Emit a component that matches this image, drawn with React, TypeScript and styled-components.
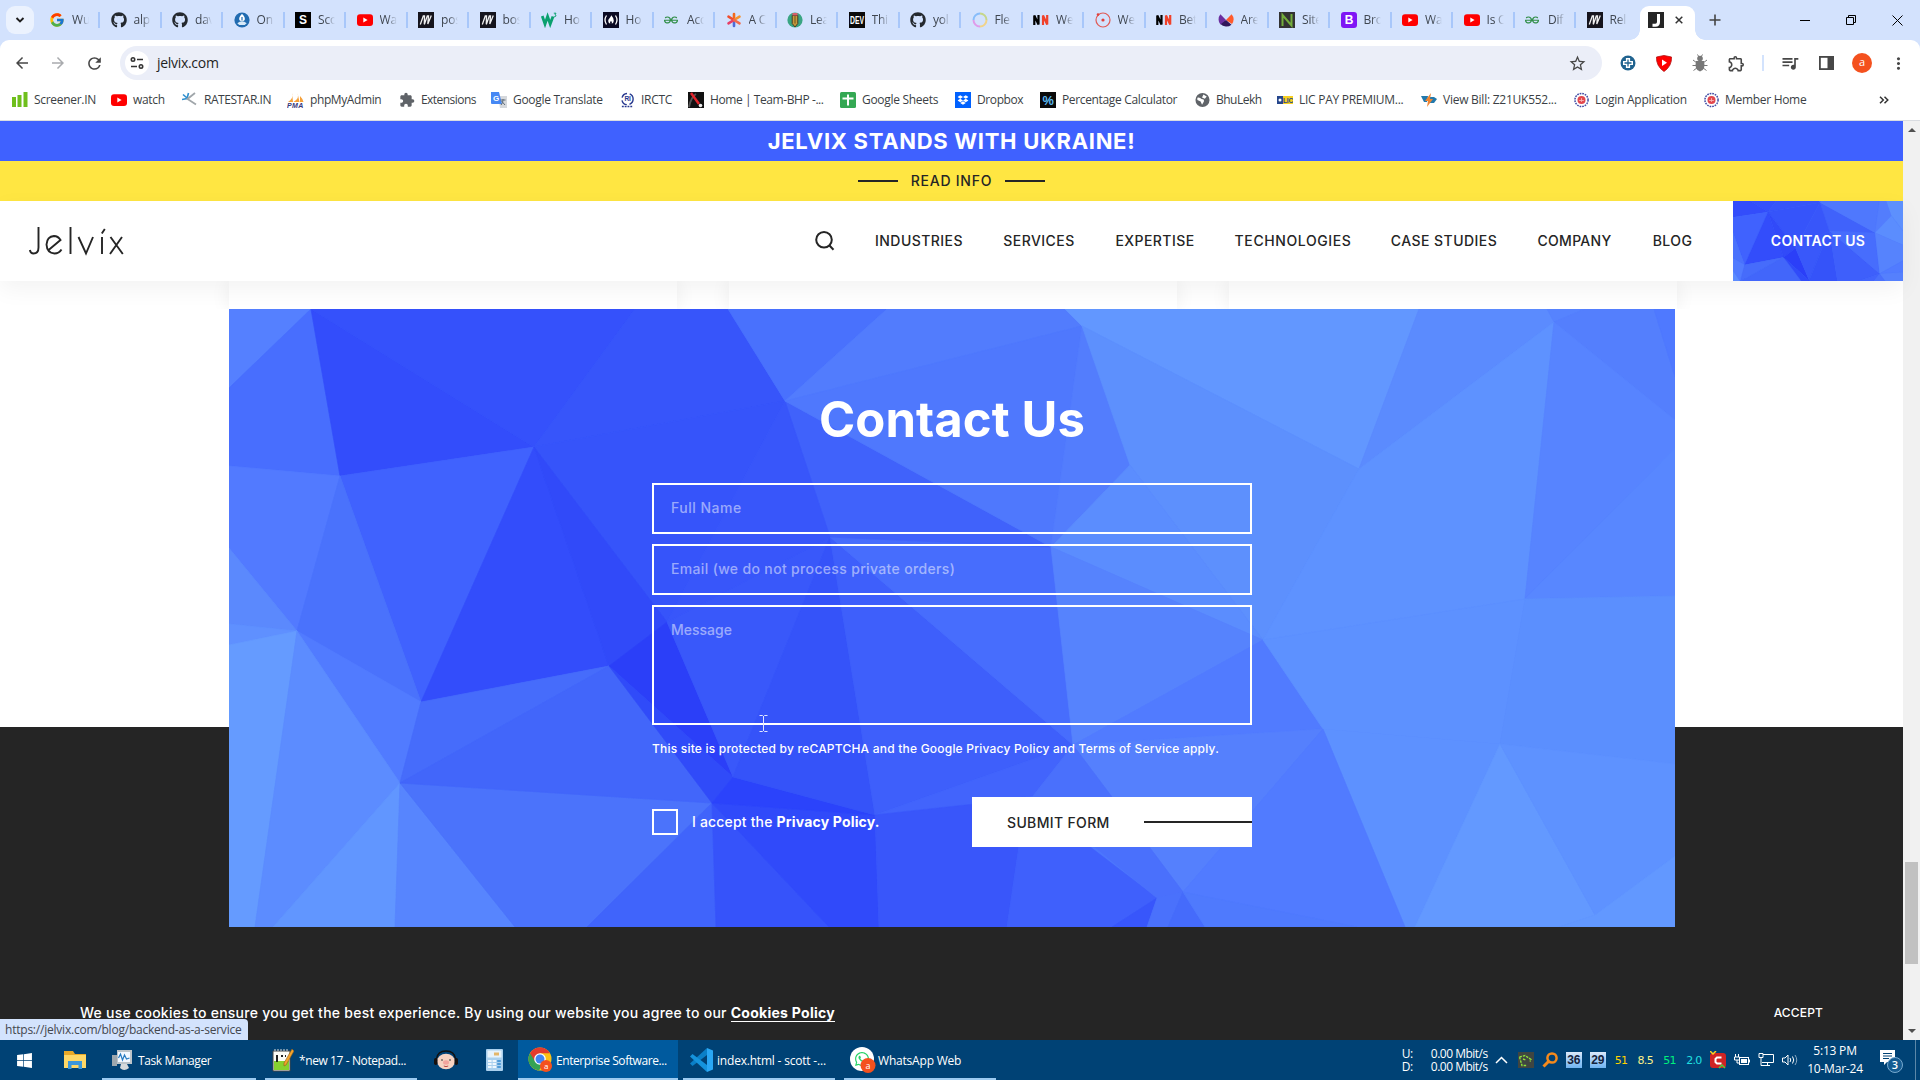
import React from "react";
import styled, { createGlobalStyle, css } from "styled-components";
import { FaGithub, FaDropbox, FaWhatsapp, FaWindows } from "react-icons/fa";
import { FcGoogle } from "react-icons/fc";
import { SiGeeksforgeeks } from "react-icons/si";
import { MdArrowBack, MdArrowForward, MdRefresh, MdStarOutline, MdQueueMusic, MdOutlineExtension, MdExtension, MdMoreVert } from "react-icons/md";

const GlobalStyle = createGlobalStyle`
  * { box-sizing: border-box; }
  body { margin: 0; overflow: hidden; background: #fff; }
`;

const ui = `"Open Sans", "Noto Sans", sans-serif`;
const brand = `Inter, "Liberation Sans", sans-serif`;

const Screen = styled.div`
  position: relative;
  width: 1920px;
  height: 1080px;
  display: flex;
  flex-direction: column;
  overflow: hidden;
  font-family: ${ui};
  svg { display: block; flex: none; }
`;

/* ---------- Browser tabs ---------- */
const TabStrip = styled.div`
  height: 40px;
  flex: none;
  display: flex;
  align-items: center;
  background: #d3e2fd;
  padding-left: 6px;
`;
const TabSearch = styled.div`
  width: 28px;
  height: 28px;
  border-radius: 9px;
  background: #ebf2fe;
  display: grid;
  place-items: center;
  margin-right: 15px;
`;
const Tab = styled.div`
  width: 61.5px;
  height: 16px;
  flex: none;
  display: flex;
  align-items: center;
  gap: 7px;
`;
const TabTitle = styled.span`
  width: 17px;
  overflow: hidden;
  white-space: nowrap;
  font-size: 12px;
  line-height: 16px;
  letter-spacing: -0.2px;
  color: #3f4650;
  mask-image: linear-gradient(90deg, #000 45%, transparent 100%);
`;
const TabDivider = styled.i`
  width: 2px;
  height: 16px;
  margin-left: 2px;
  background: #a8c7fa;
`;
const ActiveTab = styled.div`
  position: relative;
  align-self: flex-end;
  width: 55px;
  height: 34px;
  margin-left: -8px;
  padding: 0 12px 0 8px;
  display: flex;
  align-items: center;
  justify-content: space-between;
  background: #fff;
  border-radius: 9px 9px 0 0;
  padding-bottom: 6px;
  &::before, &::after {
    content: "";
    position: absolute;
    bottom: 0;
    width: 10px;
    height: 10px;
  }
  &::before { left: -10px; background: radial-gradient(circle at 0 0, transparent 9.5px, #fff 10px); }
  &::after { right: -10px; background: radial-gradient(circle at 100% 0, transparent 9.5px, #fff 10px); }
`;
const NewTab = styled.div`margin-left: 14px;`;
const WindowButtons = styled.div`
  margin-left: auto;
  display: flex;
  width: 138px;
  > * { width: 46px; display: flex; justify-content: center; }
`;

/* ---------- Toolbar ---------- */
const Toolbar = styled.div`
  height: 45px;
  flex: none;
  display: flex;
  align-items: center;
  background: linear-gradient(#d3e2fd, #d3e2fd) 0 0 / 100% 10px no-repeat;
  color: #474747;
`;
const ToolbarSurface = styled.div`
  width: 100%;
  height: 45px;
  display: flex;
  align-items: center;
  background: #fff;
  border-radius: 9px 9px 0 0;
  padding: 1px 4px 0 4px;
`;
const ToolButton = styled.div`
  width: 36px;
  display: flex;
  justify-content: center;
`;
const Omnibox = styled.div`
  flex: none;
  width: 1482px;
  height: 34px;
  margin: 0 8px;
  padding: 0 15px 0 5px;
  border-radius: 17px;
  background: #ebeef8;
  display: flex;
  align-items: center;
  justify-content: space-between;
`;
const Address = styled.div`
  display: flex;
  align-items: center;
  gap: 8px;
  font-size: 14px;
  line-height: 20px;
  letter-spacing: -0.3px;
  color: #1f1f1f;
`;
const SiteChip = styled.div`
  width: 24px;
  height: 24px;
  border-radius: 50%;
  background: #fff;
  display: grid;
  place-items: center;
`;
const ToolDivider = styled.i`
  width: 2px;
  height: 16px;
  margin: 0 8px;
  background: #d3e3fd;
`;
const Avatar = styled.div`
  width: 20px;
  height: 20px;
  border-radius: 50%;
  background: #f4511e;
  color: #fff;
  font-size: 11px;
  line-height: 18px;
  text-align: center;
`;

const Bookmarks = styled.div`
  height: 36px;
  flex: none;
  display: flex;
  align-items: center;
  padding: 0 0 6px 12px;
  background: #fff;
  border-bottom: 1px solid #d9dce1;
`;
const Bookmark = styled.div<{ $w: number; $track?: number }>`
  width: ${(p) => p.$w}px;
  flex: none;
  display: flex;
  align-items: center;
  gap: 6px;
  white-space: nowrap;
  font-size: 12px;
  line-height: 16px;
  letter-spacing: ${(p) => p.$track ?? -0.3}px;
  color: #3b3f45;
`;
const Overflow = styled.div`margin-left: 35px;`;

/* ---------- Web page ---------- */
const Viewport = styled.div`
  height: 919px;
  flex: none;
  display: flex;
`;
const Page = styled.div`
  width: 1903px;
  display: flex;
  flex-direction: column;
  font-family: ${brand};
  background: linear-gradient(#fff 606px, #252525 606px);
`;
const Stand = styled.div`
  height: 40px;
  flex: none;
  background: #3f61ff;
  color: #fff;
  display: flex;
  align-items: center;
  justify-content: center;
  font-size: 22px;
  font-weight: 700;
  letter-spacing: 0.7px;
`;
const ReadInfo = styled.div`
  height: 40px;
  flex: none;
  background: #ffe642;
  color: #252525;
  display: flex;
  align-items: center;
  justify-content: center;
  gap: 13px;
  font-size: 14px;
  line-height: 16px;
  font-weight: 500;
  letter-spacing: 0.75px;
  &::before, &::after { content: ""; width: 40px; height: 2px; background: #252525; }
`;
const Header = styled.header`
  position: relative;
  z-index: 1;
  height: 80px;
  flex: none;
  display: flex;
  align-items: center;
  background: #fff;
  padding-left: 29px;
  box-shadow: 0 8px 22px rgba(0, 0, 0, 0.05);
`;
const Nav = styled.nav`
  margin-left: auto;
  display: flex;
  align-items: center;
  gap: 40px;
  padding: 0 40px 1px 0;
`;
const NavLink = styled.a<{ $w: number; $track?: number }>`
  width: ${(p) => p.$w}px;
  white-space: nowrap;
  display: flex;
  justify-content: center;
  font-size: 14px;
  font-weight: 500;
  letter-spacing: ${(p) => p.$track ?? 0.45}px;
  color: #252525;
`;
const HeaderCta = styled.div`
  display: grid;
  width: 170px;
  height: 80px;
  > * { grid-area: 1 / 1; }
`;
const CtaText = styled.span`
  place-self: center;
  padding-bottom: 1px;
  color: #fff;
  font-size: 14px;
  font-weight: 600;
  letter-spacing: 0.25px;
  z-index: 1;
`;
const Cards = styled.div`
  height: 28px;
  flex: none;
  display: flex;
  gap: 52px;
  padding-left: 229px;
  overflow: hidden;
`;
const Card = styled.div`
  width: 448px;
  background: #fff;
  box-shadow: 0 0 20px rgba(0, 0, 0, 0.07);
`;
const Contact = styled.section`
  display: grid;
  width: 1446px;
  height: 618px;
  flex: none;
  margin-left: 229px;
  > * { grid-area: 1 / 1; }
`;
const Form = styled.form`
  position: relative;
  width: 600px;
  justify-self: center;
  display: flex;
  flex-direction: column;
  color: #fff;
`;
const Title = styled.h2`
  margin: 82px 0 0;
  height: 92px;
  line-height: 58px;
  text-align: center;
  font-size: 49px;
  font-weight: 700;
  letter-spacing: 0.1px;
`;
const Field = styled.div<{ $h: number; $track: number }>`
  height: ${(p) => p.$h}px;
  flex: none;
  margin-bottom: 10px;
  border: 2px solid #fff;
  padding: 13px 17px;
  font-size: 14px;
  line-height: 19px;
  font-weight: 500;
  letter-spacing: ${(p) => p.$track}px;
  color: rgba(255, 255, 255, 0.5);
`;
const Notice = styled.p`
  margin: 4px 0 0;
  height: 58px;
  font-size: 12px;
  line-height: 20px;
  font-weight: 500;
  white-space: nowrap;
  letter-spacing: 0.21px;
`;
const Actions = styled.div`
  display: flex;
  justify-content: space-between;
  height: 50px;
`;
const Consent = styled.label`
  display: flex;
  align-items: center;
  gap: 14px;
  font-size: 14px;
  line-height: 18px;
  font-weight: 500;
  letter-spacing: 0.18px;
  white-space: nowrap;
  b { font-weight: 700; }
  span { padding-bottom: 1px; }
`;
const Check = styled.i`
  width: 26px;
  height: 26px;
  border: 2px solid #fff;
`;
const Submit = styled.div`
  width: 280px;
  height: 50px;
  background: #fff;
  color: #252525;
  display: flex;
  align-items: center;
  justify-content: space-between;
  padding-left: 35px;
  font-size: 14px;
  font-weight: 500;
  letter-spacing: 0.35px;
  &::after { content: ""; width: 108px; height: 2px; background: #252525; }
`;
const Cookies = styled.div`
  height: 26px;
  margin: 72px 80px 0;
  display: flex;
  justify-content: space-between;
  align-items: center;
  color: #fff;
  font-size: 14px;
  font-weight: 500;
  letter-spacing: 0.265px;
  a { font-weight: 700; border-bottom: 1px solid #fff; }
`;
const Accept = styled.span`font-size: 12px; letter-spacing: 0.15px;`;

const Scrollbar = styled.div`
  width: 17px;
  background: #f1f1f1;
  display: flex;
  flex-direction: column;
  align-items: center;
  padding: 6px 0;
`;
const Thumb = styled.div`
  width: 13px;
  height: 102px;
  margin: 730px 0 auto;
  background: #c1c1c1;
`;
const StatusBubble = styled.div`
  position: absolute;
  left: 0;
  top: 1019px;
  width: 248px;
  height: 21px;
  padding-left: 5px;
  border-radius: 0 4px 0 0;
  background: #d3e3fd;
  color: #43474e;
  font-size: 12px;
  line-height: 21px;
  letter-spacing: -0.22px;
  white-space: nowrap;
`;
const Caret = styled.svg`
  position: absolute;
  left: 107px;
  top: 406px;
`;

/* ---------- Taskbar ---------- */
const Taskbar = styled.div`
  height: 40px;
  flex: none;
  display: flex;
  background: #004275;
  color: #fff;
  font-size: 12px;
`;
const taskItem = css`
  display: flex;
  align-items: center;
  height: 40px;
  flex: none;
`;
const Pinned = styled.div<{ $w: number }>`
  ${taskItem}
  width: ${(p) => p.$w}px;
  justify-content: center;
`;
const Running = styled.div<{ $w: number; $gap?: number; $active?: boolean; $pad?: number; $space?: number; $track?: number }>`
  ${taskItem}
  width: ${(p) => p.$w}px;
  margin-right: ${(p) => p.$gap ?? 0}px;
  padding-left: ${(p) => p.$pad ?? 6}px;
  gap: ${(p) => p.$space ?? 5}px;
  white-space: nowrap;
  letter-spacing: ${(p) => p.$track ?? -0.4}px;
  background: ${(p) => (p.$active ? "#005a9e" : "transparent")};
  box-shadow: inset 0 -2px #9ccaf0;
`;
const Tray = styled.div`
  margin-left: auto;
  display: flex;
  align-items: center;
`;
const Speed = styled.div`
  display: grid;
  grid-template-columns: 29px 59px;
  width: 88px;
  font-size: 12px;
  line-height: 13px;
  letter-spacing: -0.5px;
  white-space: nowrap;
`;
const TrayIcon = styled.div<{ $w?: number }>`
  width: ${(p) => p.$w ?? 24}px;
  display: flex;
  justify-content: center;
`;
const Temp = styled.div<{ $c: string }>`
  width: 24.3px;
  text-align: center;
  color: ${(p) => p.$c};
  font: 11px "DejaVu Sans", sans-serif;
  letter-spacing: -0.7px;
`;
const Meters = styled.div`
  display: flex;
  gap: 8px;
  padding: 0 3px 0 4px;
`;
const Meter = styled.div`
  width: 16px;
  height: 16px;
  background: linear-gradient(#dbe9fb, #6fb4f2);
  color: #14233c;
  font: bold 12px/17px "Liberation Sans", sans-serif;
  text-align: center;
`;
const Clock = styled.div`
  width: 66px;
  text-align: center;
  font-size: 12px;
  line-height: 18px;
  letter-spacing: -0.2px;
  white-space: nowrap;
`;
const ShowDesktop = styled.i`
  height: 40px;
  width: 5px;
  margin-left: 1px;
  border-left: 1px solid #5c87a8;
`;

/* ---------- Small drawings ---------- */
type TileProps = { bg: string; fg?: string; t: string; size?: number; r?: number; fit?: number };
const Tile = ({ bg, fg = "#fff", t, size = 12, r = 0, fit }: TileProps) => (
  <svg width="16" height="16" viewBox="0 0 16 16">
    <rect width="16" height="16" rx={r} fill={bg} />
    <text x="8" y={8 + size * 0.36} textAnchor="middle" fill={fg} fontFamily="Liberation Sans, sans-serif" fontWeight="700" fontSize={size} textLength={fit} lengthAdjust="spacingAndGlyphs">{t}</text>
  </svg>
);
const YouTube = () => (
  <svg width="16" height="16" viewBox="0 0 16 16"><rect y="2.3" width="16" height="11.6" rx="3" fill="#f00" /><path d="M6.3 5.6v5L10.6 8z" fill="#fff" /></svg>
);
const Daily = () => (
  <svg width="16" height="16" viewBox="0 0 16 16"><rect width="16" height="16" fill="#15141d" /><path d="M2.3 12.500 5.300 4h1.200L6.300 12M6.300 12.500 9.300 4h1.200L9.800 12l3.500-8.500" stroke="#f1f1f1" strokeWidth="1.300" fill="none" /></svg>
);
const Geeks = () => <SiGeeksforgeeks size={14} color="#2f8d46" style={{ marginRight: 2 }} />;
const OnIcon = () => (
  <svg width="16" height="16" viewBox="0 0 16 16"><circle cx="8" cy="8" r="7.6" fill="#216bb0" /><path d="M8 1.800q4 4 2.500 6.500-2.500 2-5 0Q4 6 8 1.800z" fill="#fff" /><path d="M3.300 11.300Q8 7 12.700 11.300L10.700 13H5.300z" fill="#d6e9f8" /><path d="M8 5v3.500" stroke="#216bb0" strokeWidth="1.200" /></svg>
);
const W3 = () => (
  <svg width="16" height="16" viewBox="0 0 16 16"><path d="m1.200 4 2.800 8 2.600-7.500L9.200 12 12 4.500" stroke="#0aa06e" strokeWidth="2.800" fill="none" /><path d="M12.800 1.200h2.200l-1 1.400q1.700.300.600 1.800-.9.700-1.800.1" stroke="#0aa06e" fill="none" /></svg>
);
const Camp = () => (
  <svg width="16" height="16" viewBox="0 0 16 16"><rect width="16" height="16" fill="#0a0a23" /><path d="M3.500 3.500q-3 4.500 0 9M12.500 3.500q3 4.500 0 9" stroke="#fff" strokeWidth="1.300" fill="none" /><path d="M8.300 3.200q2.700 3 2.500 5.500-.2 2.300-2 3 .5-1.700-.8-3-1.500 1.300-.8 3-2-.7-2-2.800 0-1.500 1.300-2.700 1-.9 1.800-3z" fill="#fff" /></svg>
);
const Star6 = () => (
  <svg width="16" height="16" viewBox="0 0 16 16" strokeWidth="2.600" strokeLinecap="round"><path d="M8 8V2" stroke="#f26a1b" /><path d="M8 8v6" stroke="#4f6bd8" /><path d="m8 8-5.500-3.300" stroke="#f04e2e" /><path d="m8 8 5.500-3.300" stroke="#f59330" /><path d="M8 8 2.500 11.400" stroke="#e73e66" /><path d="m8 8 5.500 3.400" stroke="#f26a4b" /></svg>
);
const Pencil = () => (
  <svg width="16" height="16" viewBox="0 0 16 16"><circle cx="8" cy="8" r="7.600" fill="#3aa583" /><path d="M5.200 3.500h5.600v8L8 15l-2.800-3.500z" fill="#c99a3b" stroke="#4b3b24" /><path d="M5.500 1h5v2.500h-5z" fill="#d65f6b" /><path d="M8 4v7.500" stroke="#6d5123" /></svg>
);
const Ring = () => (
  <svg width="16" height="16" viewBox="0 0 16 16" fill="none" strokeWidth="2"><path d="M8 1.500A6.500 6.500 0 0 1 14.500 8" stroke="#c5d68b" /><path d="M14.500 8A6.500 6.500 0 0 1 8 14.500" stroke="#f1d38a" /><path d="M8 14.500A6.500 6.500 0 0 1 1.500 8" stroke="#df9bea" /><path d="M1.500 8A6.500 6.500 0 0 1 8 1.500" stroke="#88bdfa" /></svg>
);
const NN = () => (
  <svg width="16" height="16" viewBox="0 0 16 16" fill="none" strokeWidth="2.200"><path d="M1.300 13V3.500l4.200 9V3" stroke="#000" /><path d="M10 13V3.500l4.200 9V3" stroke="#f0412a" /></svg>
);
const Orbit = () => (
  <svg width="16" height="16" viewBox="0 0 16 16"><circle cx="8" cy="8" r="7" stroke="#e05a55" strokeWidth="1.200" fill="none" /><circle cx="8" cy="8" r="1.600" fill="#e0413c" /><circle cx="3" cy="2.600" r="1.300" fill="#e0413c" /></svg>
);
const Purple = () => (
  <svg width="16" height="16" viewBox="0 0 16 16"><path d="M13.600 2.300 8 8l6 4A8 8 0 0 0 13.600 2.300z" fill="#ff5a2c" /><path d="M2.400 11 8 8l5.500 4.700A8 8 0 0 1 2.400 12z" fill="#31165a" /><path d="M2.400 2.300 8 8l-5.600 4.500A8 8 0 0 1 2.400 2.300z" fill="#6b2fa0" /></svg>
);
const Node = () => (
  <svg width="16" height="16" viewBox="0 0 16 16"><rect width="16" height="16" fill="#333" /><path d="M3.500 14V3l9 10.500V2" fill="none" stroke="#73ad3c" strokeWidth="2" /></svg>
);
const JTile = () => (
  <svg width="16" height="16" viewBox="0 0 16 16"><rect width="16" height="16" fill="#252525" /><path d="M10.500 2v8q0 3.300-3.200 3.300H4.500" fill="none" stroke="#fff" strokeWidth="3" /></svg>
);
const Bars = () => (
  <svg width="16" height="16" viewBox="0 0 16 16" fill="#6fbf1c"><rect y="5" width="4" height="10" /><rect x="5.500" y="3" width="4" height="12" /><rect x="11.500" width="4" height="15" /></svg>
);
const Ratestar = () => (
  <svg width="16" height="16" viewBox="0 0 16 16" fill="none"><path d="M1 2.500 5 6M0 7.500l5-1L6.500 1" stroke="#2f8fce" strokeWidth="1.600" /><path d="M13 1 5.500 7 14 12.500" stroke="#a0a6aa" strokeWidth="1.800" /></svg>
);
const Pma = () => (
  <svg width="17" height="16" viewBox="0 0 17 16"><path d="M5 1q2 5-4 9h5zM10.500 1q2.500 5-4 9h6zM13 4q3 3 3.500 6H13z" fill="#f5a13a" /><text x="0" y="15.500" fontSize="7" fontWeight="700" fontStyle="italic" fontFamily="Liberation Sans" fill="#35377b" textLength="16">PMA</text></svg>
);
const Translate = () => (
  <svg width="16" height="16" viewBox="0 0 16 16"><path d="M7 4h9v12H9z" fill="#d5d8dc" /><path d="M0 0h8l3 12H1a1 1 0 0 1-1-1z" fill="#4688f4" /><text x="2" y="9" fontSize="8" fontFamily="Liberation Sans" fontWeight="700" fill="#fff">G</text><path d="M9.500 8h5M12 7v1q0 3-2 5M10.500 9l3.500 4" stroke="#5e6b78" fill="none" /></svg>
);
const Irctc = () => (
  <svg width="15" height="16" viewBox="0 0 16 16"><circle cx="8" cy="7" r="6" fill="none" stroke="#2a3a8f" strokeDasharray="7 3" strokeWidth="1.500" /><text x="4.800" y="9.500" fontSize="7" fontFamily="Liberation Sans" fontWeight="700" fill="#2a3a8f">RI</text><path d="M2 15h12" stroke="#2a3a8f" strokeDasharray="2 1" strokeWidth="1.500" /></svg>
);
const Bhp = () => (
  <svg width="16" height="16" viewBox="0 0 16 16"><rect width="16" height="16" fill="#111" /><path d="M1 15Q3 5 8 2" stroke="#555" strokeWidth="2" fill="none" /><path d="m3 1 8 11" stroke="#e3242b" strokeWidth="2.500" /><circle cx="12.500" cy="13.500" r="1.800" fill="#eee" /></svg>
);
const Sheets = () => (
  <svg width="16" height="16" viewBox="0 0 16 16"><rect width="16" height="16" rx="1.500" fill="#34a853" /><path d="M8 2.500v11M2.500 6.500h11" stroke="#fff" strokeWidth="2" /></svg>
);
const Drop = () => (
  <svg width="16" height="16" viewBox="0 0 16 16"><rect width="16" height="16" fill="#0061fe" /><g transform="translate(2.500 2.500)"><FaDropbox size={11} color="#fff" /></g></svg>
);
const Globe = () => (
  <svg width="15" height="16" viewBox="0 0 16 16"><circle cx="8" cy="8" r="7.500" fill="#5f6368" /><path d="M2.500 5.500q2.500-1 4.500 1.500 3 0 2.500 2.500L7.500 13 6 9.500 2.500 8zM9 2.200l3.500 2-2 2.500-3-1.500z" fill="#fff" /></svg>
);
const Lic = () => (
  <svg width="16" height="16" viewBox="0 0 16 16"><rect y="4" width="16" height="8" fill="#f7cf22" /><rect y="4" width="6" height="8" fill="#25468c" /><text x="6" y="10.500" fontSize="6.500" fontWeight="700" fontFamily="Liberation Sans" fill="#25468c" textLength="10">LIC</text><circle cx="3" cy="8" r="1.500" fill="#fff" /></svg>
);
const Bill = () => (
  <svg width="16" height="16" viewBox="0 0 16 16"><path d="M0 4h7L6 10H3zM9 5h4l3 2-3 4H8z" fill="#2279ad" /><path d="M10 1 4 9h3l-1 6 6-8H9z" fill="#ee8532" /></svg>
);
const Seal = () => (
  <svg width="15" height="16" viewBox="0 0 16 16"><circle cx="8" cy="8" r="7" fill="none" stroke="#3d4aa3" strokeWidth="1.600" strokeDasharray="1.800 1" /><circle cx="8" cy="8" r="4.300" fill="#e2474d" /><path d="M5.500 8.500h5M8 6v4" stroke="#f5b5b5" /></svg>
);
const Bug = () => (
  <svg width="16" height="18" viewBox="0 0 16 18" fill="#777"><circle cx="8" cy="4.500" r="2.800" /><path d="M4 7h8q2 9-4 10.500Q2 16 4 7z" /><path d="m1 6 4 3M15 6l-4 3M.5 11.500h15M1.500 16.500l4-3M14.500 16.500l-4-3M5.500.5 7 3M10.500.5 9 3" stroke="#777" fill="none" /></svg>
);

const TABS: [React.ReactNode, string][] = [
  [<FcGoogle size={16} />, "Wu"], [<FaGithub size={16} color="#24292f" />, "alp"], [<FaGithub size={16} color="#24292f" />, "dav"],
  [<OnIcon />, "On"], [<Tile bg="#000" t="S" />, "Sco"], [<YouTube />, "Wa"], [<Daily />, "pos"], [<Daily />, "bos"], [<W3 />, "Ho"],
  [<Camp />, "Ho"], [<Geeks />, "Acc"], [<Star6 />, "A C"], [<Pencil />, "Lea"], [<Tile bg="#090909" t="DEV" size={10} fit={14} />, "Thi"],
  [<FaGithub size={16} color="#24292f" />, "yol"], [<Ring />, "Fle"], [<NN />, "We"], [<Orbit />, "We"], [<NN />, "Bet"], [<Purple />, "Are"],
  [<Node />, "Site"], [<Tile bg="#7f16f5" t="B" r={3} />, "Bro"], [<YouTube />, "Wa"], [<YouTube />, "Is C"], [<Geeks />, "Dif"], [<Daily />, "Rel"],
];

const MARKS: [React.ReactNode, string, number, number?][] = [
  [<Bars />, "Screener.IN", 99], [<YouTube />, "watch", 71], [<Ratestar />, "RATESTAR.IN", 105, -0.45], [<Pma />, "phpMyAdmin", 112, -0.4],
  [<MdExtension size={16} color="#5f6368" />, "Extensions", 92, -0.55], [<Translate />, "Google Translate", 129], [<Irctc />, "IRCTC", 68],
  [<Bhp />, "Home | Team-BHP -...", 152, -0.42], [<Sheets />, "Google Sheets", 115], [<Drop />, "Dropbox", 85, -0.4],
  [<Tile bg="#0a0a0a" fg="#5bbcf5" t="%" size={13} fit={11} />, "Percentage Calculator", 155, -0.35], [<Globe />, "BhuLekh", 82, -0.5],
  [<Lic />, "LIC PAY PREMIUM...", 144, -0.27], [<Bill />, "View Bill: Z21UK552...", 153, -0.25], [<Seal />, "Login Application", 130, -0.25], [<Seal />, "Member Home", 140],
];

/* Facets of the low-poly artwork: fill followed by corner points. */
const FACETS: [string, string][] = [
  ["#5580ff", "0,0 82,0 0,79"],
  ["#486efe", "82,0 111,167 0,157 0,79"],
  ["#334dfb", "82,0 305,138 111,167"],
  ["#3551fb", "82,0 406,0 305,138"],
  ["#3755fa", "406,0 499,0 556,92 305,138"],
  ["#3654fa", "305,138 556,92 438,313"],
  ["#4062fe", "111,167 305,138 192,393"],
  ["#334dfb", "305,138 380,357 192,393"],
  ["#314af9", "305,138 438,313 380,357"],
  ["#527aff", "0,157 111,167 68,322 0,239"],
  ["#4a72fc", "111,167 192,393 68,322"],
  ["#517bff", "68,322 192,393 171,474"],
  ["#5b89fd", "0,239 68,322 0,315"],
  ["#5f90ff", "0,315 68,322 0,336"],
  ["#659bff", "0,336 68,322 26,618 0,618"],
  ["#5c8cff", "68,322 171,474 44,618 26,618"],
  ["#6196ff", "171,474 166,618 44,618"],
  ["#5785fe", "171,474 286,618 166,618"],
  ["#4b73fb", "171,474 483,494 358,618 286,618"],
  ["#466cfb", "192,393 380,357 171,474"],
  ["#4266fa", "380,357 483,494 171,474"],
  ["#4064fb", "483,494 487,618 358,618"],
  ["#3653fa", "483,494 600,618 487,618"],
  ["#304afa", "483,494 646,506 650,618 600,618"],
  ["#2b3ff8", "380,357 438,313 504,468"],
  ["#304bf9", "380,357 504,468 483,494"],
  ["#2b43fb", "504,468 646,506 483,494"],
  ["#3958fa", "438,313 601,228 504,468"],
  ["#3553f9", "601,228 646,506 504,468"],
  ["#3e5ffb", "601,228 844,436 646,506"],
  ["#476dfd", "601,228 822,238 844,436"],
  ["#4062fb", "556,92 822,238 601,228"],
  ["#3856fa", "556,92 601,228 438,313"],
  ["#4971fd", "499,0 658,0 556,92"],
  ["#527cfd", "658,0 836,0 853,17 556,92"],
  ["#4f78fd", "556,92 853,17 822,238"],
  ["#537dfd", "853,17 901,156 822,238"],
  ["#6297ff", "836,0 1190,0 1130,160 853,17"],
  ["#5d90fd", "853,17 1130,160 1034,331 901,156"],
  ["#5b8dfe", "901,156 1034,331 822,238"],
  ["#5683fd", "822,238 1034,331 844,436"],
  ["#517bff", "1034,331 1094,420 844,436"],
  ["#5b8bfe", "1190,0 1318,0 1325,13 1130,160"],
  ["#5e92ff", "1130,160 1325,13 1296,290 1034,331"],
  ["#5683fe", "1318,0 1356,0 1325,13"],
  ["#547ffd", "1356,0 1425,0 1446,68 1446,111 1325,13"],
  ["#4f79ff", "1425,0 1446,0 1446,68"],
  ["#5784ff", "1325,13 1446,111 1446,139 1296,290"],
  ["#5887ff", "1296,290 1446,139 1446,287"],
  ["#5d91ff", "1034,331 1296,290 1271,435 1094,420"],
  ["#5b8ffe", "1296,290 1446,287 1446,455 1271,435"],
  ["#5d91ff", "1094,420 1271,435 1186,618 1176,618"],
  ["#6399ff", "1271,435 1366,606 1330,618 1186,618"],
  ["#5e92ff", "1271,435 1446,455 1446,547 1366,606"],
  ["#6298ff", "1366,606 1446,547 1446,618 1330,618"],
  ["#5580fd", "844,436 1094,420 954,583"],
  ["#517bff", "1094,420 1176,618 1128,618 954,583"],
  ["#4264fc", "646,506 844,436 804,487"],
  ["#3956fa", "646,506 797,489 778,618 650,618"],
  ["#3f60fc", "797,489 928,589 883,618 778,618"],
  ["#4a70fc", "844,436 954,583 928,589 804,487"],
  ["#3856fb", "928,589 918,618 883,618"],
  ["#4a71fc", "928,589 954,583 939,618 918,618"],
  ["#456bfb", "954,583 976,618 939,618"],
  ["#4f7afd", "954,583 1128,618 976,618"],
];

const LowPoly = ({ w, h, box = "0 0 1446 618" }: { w: number; h: number; box?: string }) => (
  <svg width={w} height={h} viewBox={box} preserveAspectRatio="none">
    <rect width="1446" height="618" fill="#4c76fd" />
    {FACETS.map(([fill, pts]) => <polygon key={pts} points={pts} fill={fill} stroke={fill} strokeWidth="0.7" />)}
  </svg>
);

const Logo = () => (
  <svg width="96" height="30" viewBox="0 0 96 30" fill="none" stroke="#252525" strokeWidth="1.900">
    <path d="M9.500 1v20.500q0 6-5 6-3 0-3.700-3.500" />
    <path d="M19 24.500 31.500 14q-2.500-4-6.500-4-7 .5-7.500 8.500.500 8.500 8 9 4.500 0 7-4" />
    <path d="M41.500 1v27" />
    <path d="m49.500 11 7.500 16.500L64 11" />
    <path d="M73 11v17M72.800 7.500l3-4.500" />
    <path d="m81.500 11 12.300 17M93 11 81 28" />
  </svg>
);

const Chrome = () => (
  <svg width="24" height="26" viewBox="0 0 24 26"><circle cx="12" cy="12" r="11.500" fill="#fbc116" /><path d="M2 6.200A11.500 11.500 0 0 0 11 23.500l5-9z" fill="#34a353" /><path d="M12 6.200h10A11.500 11.500 0 0 0 2 6.200l5 8z" fill="#e33b2e" /><circle cx="12" cy="12" r="5.800" fill="#fff" /><circle cx="12" cy="12" r="4.500" fill="#4285f4" /><circle cx="18" cy="19" r="6" fill="#f4511e" /><text x="18" y="21.500" fontSize="8" textAnchor="middle" fill="#fff" fontFamily="Open Sans">a</text></svg>
);
const VsCode = () => (
  <svg width="24" height="24" viewBox="0 0 24 24"><path d="M18 0 1 15.500 3.500 18 18 7z" fill="#0a7fc7" /><path d="M3.500 6 1 8.500 18 24v-7z" fill="#1593dc" /><path d="m18 0 6 2.500v19L18 24z" fill="#2aa7f4" /></svg>
);
const WhatsApp = () => (
  <svg width="26" height="26" viewBox="0 0 26 26"><circle cx="12" cy="12" r="12" fill="#fff" /><g transform="translate(4 4)"><FaWhatsapp size={16} color="#25d366" /></g><circle cx="18" cy="18.500" r="7.500" fill="#f4511e" /><text x="18" y="21.500" fontSize="9" textAnchor="middle" fill="#fff" fontFamily="Open Sans">a</text></svg>
);
const TaskMgr = () => (
  <svg width="22" height="22" viewBox="0 0 22 22"><path d="M6 1h15v14H6z" fill="#bcc4c9" /><path d="M1 6h5v11H1z" fill="#9da7ae" /><path d="M7 3h12v10H7z" fill="#f2f8ff" /><path d="m7.500 9 2-4 2 6 2-5 2 4 3-1" stroke="#267ac0" strokeWidth="1.200" fill="none" /><path d="M10 15h6l2 4q-5 4-9 0z" fill="#d5d9db" /></svg>
);
const Notepad = () => (
  <svg width="22" height="24" viewBox="0 0 22 24"><path d="M1 3h17v20H1z" fill="#fcfcf5" stroke="#444" /><path d="M2 13h15v9H2z" fill="#86d12f" /><path d="M3 3v-2M6 3v-2M9 3v-2M12 3v-2M15 3v-2" stroke="#ddd" /><path d="M5 7v7M9 8h2M13 8h1" stroke="#222" strokeWidth="2" /><path d="m20 1 2 2-8 14-2 1v-3z" fill="#f2a32d" stroke="#915d15" strokeWidth=".6" /></svg>
);
const Explorer = () => (
  <svg width="22" height="20" viewBox="0 0 22 20"><path d="M0 1h9l2 3h11v14H0z" fill="#e9a928" /><path d="M0 5h22v13H0z" fill="#ffd867" /><path d="M4 19v-8h14v8h-3.500v-4h-7v4z" fill="#3b97dc" /></svg>
);
const Pig = () => (
  <svg width="24" height="20" viewBox="0 0 24 20"><path d="M2.500 12V9q1-8 9.500-8t9.500 8v3" fill="none" stroke="#111" strokeWidth="1.500" /><ellipse cx="12" cy="11.500" rx="9" ry="7.800" fill="#f7d3c2" /><rect y="8" width="3.500" height="7" rx="1.700" fill="#15100f" /><rect x="20.500" y="8" width="3.500" height="7" rx="1.700" fill="#15100f" /><ellipse cx="12" cy="12.500" rx="3" ry="2.200" fill="#f3a49d" /><circle cx="8" cy="10" r=".8" fill="#222" /><circle cx="16" cy="10" r=".8" fill="#222" /><path d="M9.800 16q2.200 1.300 4.400 0" stroke="#b44" fill="none" /></svg>
);
const Calc = () => (
  <svg width="17" height="22" viewBox="0 0 17 22"><rect width="17" height="22" rx="1" fill="#a9d0ee" /><rect x="1.500" y="1.500" width="14" height="7" fill="#e7f3fb" /><path d="M8 3.500h5v3H8z" fill="#e3b66a" />{[11, 14, 17].map((y) => [2, 6.6, 11.2].map((x) => <rect key={`${x}-${y}`} x={x} y={y} width="3.600" height="2" fill={x > 10 ? "#4f9ad6" : "#eef7fd"} />))}</svg>
);

export default function App() {
  return (
    <Screen>
      <GlobalStyle />
      <TabStrip>
        <TabSearch><svg width="10" height="8" viewBox="0 0 10 8"><path d="m1.500 2 3.500 3.500L8.500 2" fill="none" stroke="#1f1f1f" strokeWidth="1.900" /></svg></TabSearch>
        {TABS.map(([icon, title], i) => (
          <Tab key={i}>{icon}<TabTitle>{title}</TabTitle>{i < 25 && <TabDivider />}</Tab>
        ))}
        <ActiveTab><JTile /><svg width="8" height="8" viewBox="0 0 8 8"><path d="m.7.700 6.600 6.600M7.300.700.700 7.300" stroke="#333" strokeWidth="1.500" /></svg></ActiveTab>
        <NewTab><svg width="12" height="12" viewBox="0 0 12 12"><path d="M6 .5v11M.5 6h11" stroke="#444" strokeWidth="1.600" /></svg></NewTab>
        <WindowButtons>
          <span><svg width="10" height="10"><path d="M0 5.500h10" stroke="#000" /></svg></span>
          <span><svg width="10" height="10" fill="none" stroke="#000"><path d="M.5 2.500h7v7h-7zM2.500 2.500v-2h7v7h-2" /></svg></span>
          <span><svg width="11" height="11"><path d="m.5.5 10 10M10.500.5l-10 10" stroke="#000" /></svg></span>
        </WindowButtons>
      </TabStrip>

      <Toolbar>
        <ToolbarSurface>
          <ToolButton><MdArrowBack size={18} /></ToolButton>
          <ToolButton><MdArrowForward size={18} color="#a9abae" /></ToolButton>
          <ToolButton><MdRefresh size={19} /></ToolButton>
          <Omnibox>
            <Address>
              <SiteChip><svg width="14" height="14" viewBox="0 0 14 14" fill="none" stroke="#333" strokeWidth="1.600"><circle cx="3" cy="3.500" r="1.700" /><path d="M7 3.500h6M1 10.500h6" /><circle cx="11" cy="10.500" r="1.700" /></svg></SiteChip>
              jelvix.com
            </Address>
            <MdStarOutline size={19} />
          </Omnibox>
          <ToolButton><svg width="16" height="16" viewBox="0 0 16 16"><circle cx="8" cy="8" r="7.500" fill="#20638f" /><path d="M8 3v10M3 8h10" stroke="#fff" strokeWidth="4.200" /><path d="M8 4.500v7M4.500 8h7" stroke="#20638f" strokeWidth="1.300" /></svg></ToolButton>
          <ToolButton><svg width="16" height="17" viewBox="0 0 16 17"><path d="M8 .5 15.500 2q.5 9-7.500 14.500Q0 11 .5 2z" fill="#f00" stroke="#b01010" strokeWidth=".8" /><path d="m6 4.500 5 3.200-5 3.200z" fill="#fff" /></svg></ToolButton>
          <ToolButton><Bug /></ToolButton>
          <ToolButton><MdOutlineExtension size={19} /></ToolButton>
          <ToolDivider />
          <ToolButton><MdQueueMusic size={20} /></ToolButton>
          <ToolButton><svg width="15" height="14" viewBox="0 0 15 14"><rect x=".9" y=".9" width="13.200" height="12.200" fill="none" stroke="#474747" strokeWidth="1.800" /><path d="M8.500 1H14v12H8.500z" fill="#474747" /></svg></ToolButton>
          <ToolButton><Avatar>a</Avatar></ToolButton>
          <ToolButton><MdMoreVert size={19} /></ToolButton>
        </ToolbarSurface>
      </Toolbar>

      <Bookmarks>
        {MARKS.map(([icon, label, w, track]) => <Bookmark key={label} $w={w} $track={track}>{icon}{label}</Bookmark>)}
        <Overflow><svg width="10" height="8" viewBox="0 0 10 8"><path d="m1 .7 3.300 3.300L1 7.300M5.500.7 8.800 4 5.500 7.300" fill="none" stroke="#333" strokeWidth="1.500" /></svg></Overflow>
      </Bookmarks>

      <Viewport>
        <Page>
          <Stand>JELVIX STANDS WITH UKRAINE!</Stand>
          <ReadInfo>READ INFO</ReadInfo>
          <Header>
            <Logo />
            <Nav>
              <svg width="20" height="20" viewBox="0 0 20 20" fill="none" stroke="#252525" strokeWidth="2"><circle cx="9" cy="8.800" r="7.800" /><path d="m14 14 4.500 4.800" /></svg>
              <NavLink $w={88}>INDUSTRIES</NavLink>
              <NavLink $w={72}>SERVICES</NavLink>
              <NavLink $w={80}>EXPERTISE</NavLink>
              <NavLink $w={116} $track={0.6}>TECHNOLOGIES</NavLink>
              <NavLink $w={106}>CASE STUDIES</NavLink>
              <NavLink $w={75} $track={0.3}>COMPANY</NavLink>
              <NavLink $w={41}>BLOG</NavLink>
            </Nav>
            <HeaderCta><LowPoly w={170} h={80} box="136 85 821 386" /><CtaText>CONTACT US</CtaText></HeaderCta>
          </Header>
          <Cards><Card /><Card /><Card /></Cards>
          <Contact>
            <LowPoly w={1446} h={618} />
            <Form>
              <Title>Contact Us</Title>
              <Field $h={51} $track={0.5}>Full Name</Field>
              <Field $h={51} $track={0.34}>Email (we do not process private orders)</Field>
              <Field $h={120} $track={0}>Message</Field>
              <Notice>This site is protected by reCAPTCHA and the Google Privacy Policy and Terms of Service apply.</Notice>
              <Actions>
                <Consent><Check /><span>I accept the <b>Privacy Policy.</b></span></Consent>
                <Submit>SUBMIT FORM</Submit>
              </Actions>
              <Caret width="9" height="17" viewBox="0 0 9 17"><path d="M.5.5h3l1 1 1-1h3M4.500 1v15M.5 16.500h3l1-1 1 1h3" fill="none" stroke="#dfe5ff" /></Caret>
            </Form>
          </Contact>
          <Cookies>
            <span>We use cookies to ensure you get the best experience. By using our website you agree to our <a>Cookies Policy</a></span>
            <Accept>ACCEPT</Accept>
          </Cookies>
        </Page>
        <Scrollbar>
          <svg width="8" height="5"><path d="m0 5 4-4 4 4z" fill="#505050" /></svg>
          <Thumb />
          <svg width="8" height="5"><path d="m0 0 4 4 4-4z" fill="#505050" /></svg>
        </Scrollbar>
      </Viewport>
      <StatusBubble>https://jelvix.com/blog/backend-as-a-service</StatusBubble>

      <Taskbar>
        <Pinned $w={48}><FaWindows size={17} /></Pinned>
        <Pinned $w={54}><Explorer /></Pinned>
        <Running $w={154} $gap={9} $pad={9}><TaskMgr />Task Manager</Running>
        <Running $w={152} $gap={4} $pad={7}><Notepad />*new 17 - Notepad...</Running>
        <Pinned $w={49}><Pig /></Pinned>
        <Pinned $w={48}><Calc /></Pinned>
        <Running $w={160} $gap={5} $active $pad={10} $space={4} $track={-0.42}><Chrome />Enterprise Software...</Running>
        <Running $w={152} $gap={9} $space={4} $track={-0.2}><VsCode />index.html - scott -...</Running>
        <Running $w={152} $space={2} $track={-0.2}><WhatsApp />WhatsApp Web</Running>
        <Tray>
          <Speed><span>U:</span><span>0.00 Mbit/s</span><span>D:</span><span>0.00 Mbit/s</span></Speed>
          <TrayIcon><svg width="13" height="8"><path d="m1 7 5.500-5.500L12 7" fill="none" stroke="#fff" strokeWidth="1.500" /></svg></TrayIcon>
          <TrayIcon><svg width="16" height="16" viewBox="0 0 16 16"><rect width="16" height="16" fill="#3f4541" /><path d="M1.500 5 7 3.500l6 4-1 2M1.500 5l2.500 8.500h5M5 7l3 1" fill="none" stroke="#8ee03a" strokeDasharray="2.500 1" strokeWidth="1.400" /></svg></TrayIcon>
          <TrayIcon><svg width="16" height="16" viewBox="0 0 16 16" fill="none" stroke="#f58a1c"><circle cx="10" cy="6" r="4.600" strokeWidth="2.500" /><path d="m6.500 9.500-5 5" strokeWidth="3" /></svg></TrayIcon>
          <Meters><Meter>36</Meter><Meter>29</Meter></Meters>
          <Temp $c="#ffd200">51</Temp>
          <Temp $c="#fdf28a">8.5</Temp>
          <Temp $c="#00f07c">51</Temp>
          <Temp $c="#20e0e0">2.0</Temp>
          <TrayIcon><svg width="16" height="18" viewBox="0 0 16 18"><rect y="2" width="16" height="15" rx="3" fill="#cf2424" /><path d="M11.500 6.500H7L5.500 8v3L7 12.500h4.500" fill="none" stroke="#fff" strokeWidth="2" /><path d="m0 0 3 3 3-3" stroke="#ffd320" strokeWidth="1.500" fill="none" /><path d="m9 17 3-3 3 3" stroke="#4fce3a" strokeWidth="1.500" fill="none" /></svg></TrayIcon>
          <TrayIcon><svg width="16" height="12" viewBox="0 0 16 12"><rect x="5.500" y="3.500" width="9" height="7" fill="none" stroke="#fff" /><path d="M7 5h6v4H7zM15 5.500h1v3h-1z" fill="#fff" /><path d="M1.500 0v3M4.500 0v3M.5 3h5v3h-5zM3 6v3h2" stroke="#fff" fill="none" /></svg></TrayIcon>
          <TrayIcon><svg width="16" height="14" viewBox="0 0 16 14" fill="none" stroke="#fff"><path d="M5 1.500h10.500v8H4M1 .5h4v4H1zM3 4.500v8M3 12.500h9M9.500 9.500v3" /></svg></TrayIcon>
          <TrayIcon><svg width="17" height="14" viewBox="0 0 17 14" fill="none" stroke="#fff"><path d="M.5 5h2.500l3-3v10L3 9H.5zM8 5q1.500 2 0 4M10.500 3.500q2.500 3.500 0 7" /><path d="M13 2q3.500 5 0 10" stroke="#8ba9c2" /></svg></TrayIcon>
          <Clock>5:13 PM<br />10-Mar-24</Clock>
          <TrayIcon $w={46}><svg width="24" height="26" viewBox="0 0 24 26"><path d="M1 3h15v12H8l-3 3v-3H1z" fill="#fff" /><path d="M4 6.500h9M4 9h9M4 11.500h6" stroke="#004275" /><circle cx="16" cy="18" r="7.500" fill="#155b91" stroke="#78a9ce" /><text x="16" y="22" textAnchor="middle" fontFamily="Open Sans" fontWeight="600" fontSize="11" fill="#fff">3</text></svg></TrayIcon>
          <ShowDesktop />
        </Tray>
      </Taskbar>
    </Screen>
  );
}
